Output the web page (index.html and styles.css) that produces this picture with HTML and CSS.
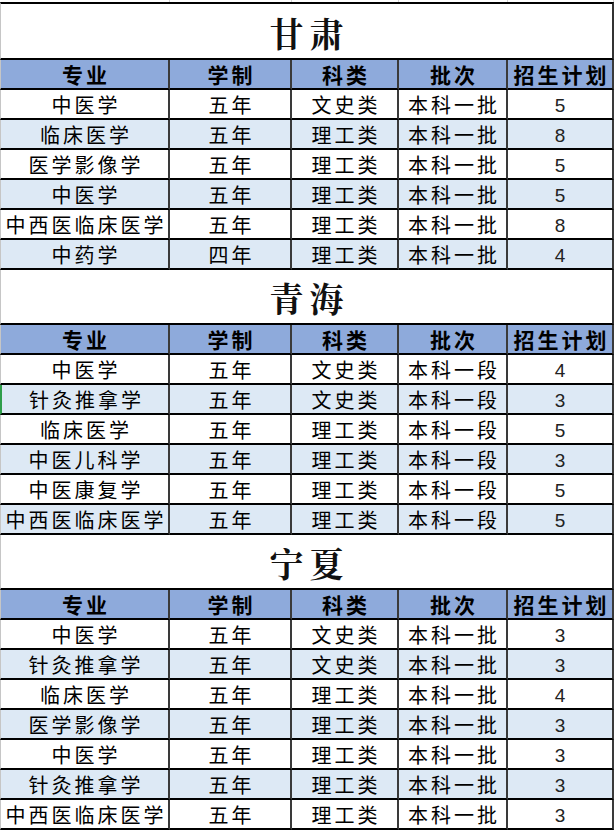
FILE: index.html
```html
<!DOCTYPE html>
<html lang="zh">
<head>
<meta charset="utf-8">
<title>招生计划</title>
<link rel="stylesheet" href="styles.css">
</head>
<body>
<div class="sheet">
  <div class="strip"></div><div class="strip"></div><div class="strip"></div><div class="strip"></div><div class="strip"></div>

  <div class="title first">甘肃</div>
  <div class="hd c1">专业</div><div class="hd">学制</div><div class="hd">科类</div><div class="hd">批次</div><div class="hd">招生计划</div>
  <div class="td c1">中医学</div><div class="td">五年</div><div class="td">文史类</div><div class="td">本科一批</div><div class="td num">5</div>
  <div class="td c1 alt">临床医学</div><div class="td alt">五年</div><div class="td alt">理工类</div><div class="td alt">本科一批</div><div class="td num alt">8</div>
  <div class="td c1">医学影像学</div><div class="td">五年</div><div class="td">理工类</div><div class="td">本科一批</div><div class="td num">5</div>
  <div class="td c1 alt">中医学</div><div class="td alt">五年</div><div class="td alt">理工类</div><div class="td alt">本科一批</div><div class="td num alt">5</div>
  <div class="td c1">中西医临床医学</div><div class="td">五年</div><div class="td">理工类</div><div class="td">本科一批</div><div class="td num">8</div>
  <div class="td c1 alt">中药学</div><div class="td alt">四年</div><div class="td alt">理工类</div><div class="td alt">本科一批</div><div class="td num alt">4</div>

  <div class="title">青海</div>
  <div class="hd c1">专业</div><div class="hd">学制</div><div class="hd">科类</div><div class="hd">批次</div><div class="hd">招生计划</div>
  <div class="td c1">中医学</div><div class="td">五年</div><div class="td">文史类</div><div class="td">本科一段</div><div class="td num">4</div>
  <div class="td c1 alt mark">针灸推拿学</div><div class="td alt">五年</div><div class="td alt">文史类</div><div class="td alt">本科一段</div><div class="td num alt">3</div>
  <div class="td c1">临床医学</div><div class="td">五年</div><div class="td">理工类</div><div class="td">本科一段</div><div class="td num">5</div>
  <div class="td c1 alt">中医儿科学</div><div class="td alt">五年</div><div class="td alt">理工类</div><div class="td alt">本科一段</div><div class="td num alt">3</div>
  <div class="td c1">中医康复学</div><div class="td">五年</div><div class="td">理工类</div><div class="td">本科一段</div><div class="td num">5</div>
  <div class="td c1 alt">中西医临床医学</div><div class="td alt">五年</div><div class="td alt">理工类</div><div class="td alt">本科一段</div><div class="td num alt">5</div>

  <div class="title">宁夏</div>
  <div class="hd c1">专业</div><div class="hd">学制</div><div class="hd">科类</div><div class="hd">批次</div><div class="hd">招生计划</div>
  <div class="td c1">中医学</div><div class="td">五年</div><div class="td">文史类</div><div class="td">本科一批</div><div class="td num">3</div>
  <div class="td c1 alt">针灸推拿学</div><div class="td alt">五年</div><div class="td alt">文史类</div><div class="td alt">本科一批</div><div class="td num alt">3</div>
  <div class="td c1">临床医学</div><div class="td">五年</div><div class="td">理工类</div><div class="td">本科一批</div><div class="td num">4</div>
  <div class="td c1 alt">医学影像学</div><div class="td alt">五年</div><div class="td alt">理工类</div><div class="td alt">本科一批</div><div class="td num alt">3</div>
  <div class="td c1">中医学</div><div class="td">五年</div><div class="td">理工类</div><div class="td">本科一批</div><div class="td num">3</div>
  <div class="td c1 alt">针灸推拿学</div><div class="td alt">五年</div><div class="td alt">理工类</div><div class="td alt">本科一批</div><div class="td num alt">3</div>
  <div class="td c1">中西医临床医学</div><div class="td">五年</div><div class="td">理工类</div><div class="td">本科一批</div><div class="td num">3</div>
</div>
</body>
</html>
```

FILE: styles.css
```css
html, body {
  margin: 0;
  padding: 0;
  background: #ffffff;
}

.sheet {
  width: 614px;
  display: grid;
  grid-template-columns: 170px 122px 107px 109px 106px;
  font-family: "Noto Sans CJK SC", "Noto Sans", sans-serif;
  color: #000;
}

.strip {
  height: 2px;
  box-sizing: border-box;
  border-right: 1px solid #d4d4d4;
  background: #fff;
}

.title {
  grid-column: 1 / -1;
  box-sizing: border-box;
  height: 55px;
  border-bottom: 2px solid #000;
  border-left: 1px solid #c6c6c6;
  border-right: 2px solid #333;
  display: flex;
  align-items: center;
  justify-content: center;
  padding-left: 6px;
  padding-top: 2px;
  font-family: "Noto Serif CJK SC", "AR PL UMing CN", "Noto Sans CJK SC", serif;
  font-weight: 700;
  font-size: 34px;
  letter-spacing: 6px;
  color: #111;
}

.title.first {
  height: 58px;
  border-top: 2px solid #000;
}

.hd, .td {
  box-sizing: border-box;
  height: 30px;
  border-bottom: 2px solid #000;
  border-right: 2px solid #3a3a3a;
  display: flex;
  align-items: center;
  justify-content: center;
  white-space: nowrap;
}

.hd {
  background: #8eaadb;
  font-weight: 700;
  font-size: 21px;
  letter-spacing: 3px;
  padding-left: 3px;
}

.td {
  background: #ffffff;
  font-size: 20px;
  letter-spacing: 3px;
  padding-left: 3px;
  padding-top: 1px;
  font-weight: 400;
}

.td.alt {
  background: #dde9f5;
}

.c1 {
  border-left: 1px solid #c6c6c6;
}

.c1.mark {
  border-left: 2px solid #2f9e4a;
}

.num {
  font-family: "Liberation Sans", Arial, sans-serif;
  font-size: 19px;
  letter-spacing: 0;
  padding-left: 0;
  padding-top: 3px;
  color: #222;
}
```
